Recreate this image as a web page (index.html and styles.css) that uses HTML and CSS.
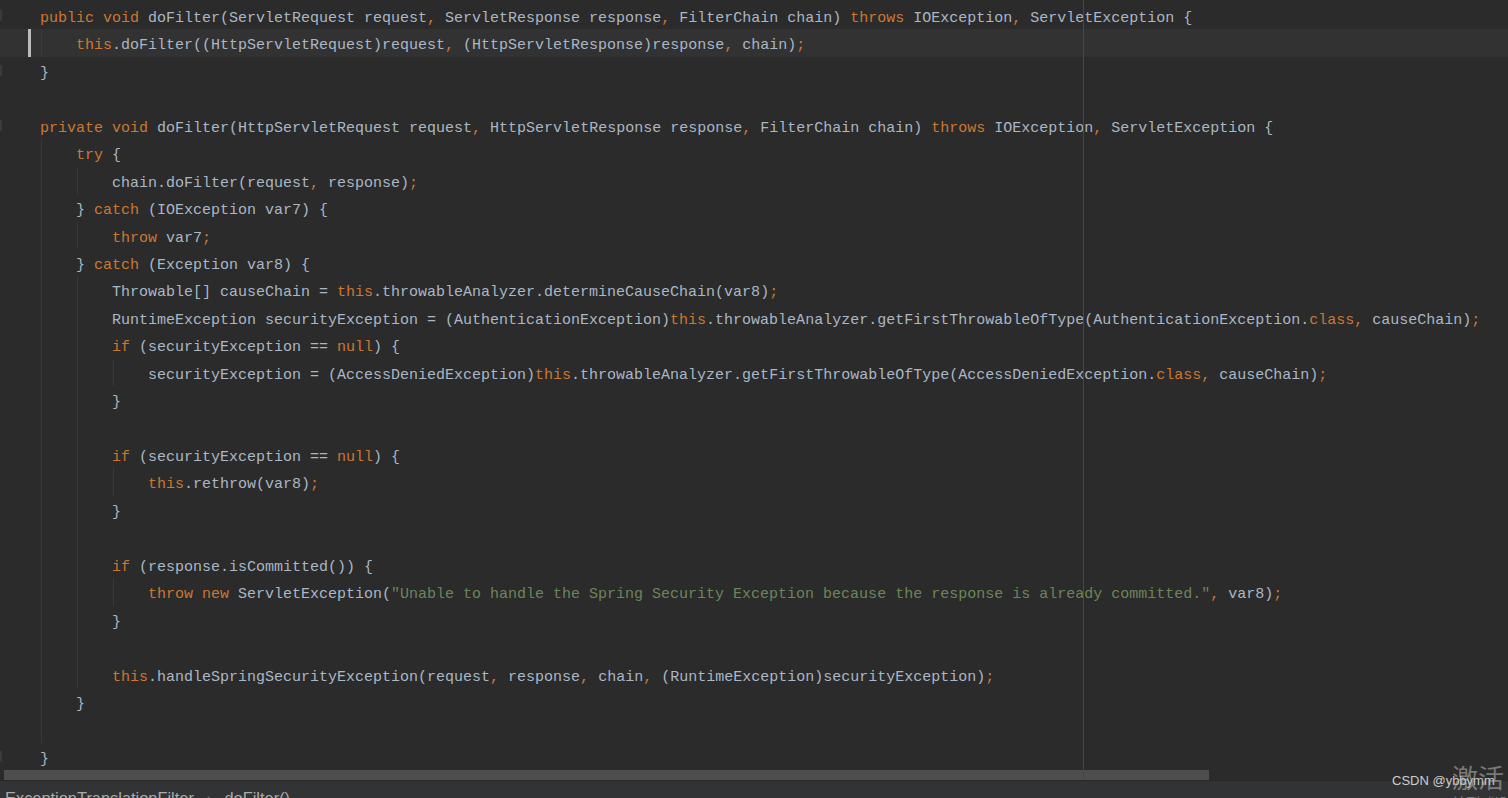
FILE: index.html
```html
<!DOCTYPE html>
<html lang="en">
<head>
    <meta charset="UTF-8">
    <meta name="viewport" content="width=device-width, initial-scale=1.0">
    <title>ExceptionTranslationFilter</title>
    <link rel="stylesheet" href="styles.css">
</head>
<body>
    <div class="main">
        <div class="editor">
            <div class="code">
                <div class="ln"><span class="gut"><i class="fold"></i></span><span class="txt"><span class="k">public void</span> doFilter(ServletRequest request<span class="p">,</span> ServletResponse response<span class="p">,</span> FilterChain chain) <span class="k">throws</span> IOException<span class="p">,</span> ServletException {</span></div>
                <div class="ln cur"><span class="gut"><i class="caret"></i></span><span class="txt"><span class="ig"></span><span class="k">this</span>.doFilter((HttpServletRequest)request<span class="p">,</span> (HttpServletResponse)response<span class="p">,</span> chain)<span class="p">;</span></span></div>
                <div class="ln"><span class="gut"><i class="fold"></i></span><span class="txt">}</span></div>
                <div class="ln"><span class="gut"></span><span class="txt"></span></div>
                <div class="ln"><span class="gut"><i class="fold"></i></span><span class="txt"><span class="k">private void</span> doFilter(HttpServletRequest request<span class="p">,</span> HttpServletResponse response<span class="p">,</span> FilterChain chain) <span class="k">throws</span> IOException<span class="p">,</span> ServletException {</span></div>
                <div class="ln"><span class="gut"></span><span class="txt"><span class="ig"></span><span class="k">try</span> {</span></div>
                <div class="ln"><span class="gut"></span><span class="txt"><span class="ig"></span><span class="ig"></span>chain.doFilter(request<span class="p">,</span> response)<span class="p">;</span></span></div>
                <div class="ln"><span class="gut"></span><span class="txt"><span class="ig"></span>} <span class="k">catch</span> (IOException var7) {</span></div>
                <div class="ln"><span class="gut"></span><span class="txt"><span class="ig"></span><span class="ig"></span><span class="k">throw</span> var7<span class="p">;</span></span></div>
                <div class="ln"><span class="gut"></span><span class="txt"><span class="ig"></span>} <span class="k">catch</span> (Exception var8) {</span></div>
                <div class="ln"><span class="gut"></span><span class="txt"><span class="ig"></span><span class="ig"></span>Throwable[] causeChain = <span class="k">this</span>.throwableAnalyzer.determineCauseChain(var8)<span class="p">;</span></span></div>
                <div class="ln"><span class="gut"></span><span class="txt"><span class="ig"></span><span class="ig"></span>RuntimeException securityException = (AuthenticationException)<span class="k">this</span>.throwableAnalyzer.getFirstThrowableOfType(AuthenticationException.<span class="k">class</span><span class="p">,</span> causeChain)<span class="p">;</span></span></div>
                <div class="ln"><span class="gut"></span><span class="txt"><span class="ig"></span><span class="ig"></span><span class="k">if</span> (securityException == <span class="k">null</span>) {</span></div>
                <div class="ln"><span class="gut"></span><span class="txt"><span class="ig"></span><span class="ig"></span><span class="ig"></span>securityException = (AccessDeniedException)<span class="k">this</span>.throwableAnalyzer.getFirstThrowableOfType(AccessDeniedException.<span class="k">class</span><span class="p">,</span> causeChain)<span class="p">;</span></span></div>
                <div class="ln"><span class="gut"></span><span class="txt"><span class="ig"></span><span class="ig"></span>}</span></div>
                <div class="ln"><span class="gut"></span><span class="txt"><span class="ig"></span><span class="ig"></span></span></div>
                <div class="ln"><span class="gut"></span><span class="txt"><span class="ig"></span><span class="ig"></span><span class="k">if</span> (securityException == <span class="k">null</span>) {</span></div>
                <div class="ln"><span class="gut"></span><span class="txt"><span class="ig"></span><span class="ig"></span><span class="ig"></span><span class="k">this</span>.rethrow(var8)<span class="p">;</span></span></div>
                <div class="ln"><span class="gut"></span><span class="txt"><span class="ig"></span><span class="ig"></span>}</span></div>
                <div class="ln"><span class="gut"></span><span class="txt"><span class="ig"></span><span class="ig"></span></span></div>
                <div class="ln"><span class="gut"></span><span class="txt"><span class="ig"></span><span class="ig"></span><span class="k">if</span> (response.isCommitted()) {</span></div>
                <div class="ln"><span class="gut"></span><span class="txt"><span class="ig"></span><span class="ig"></span><span class="ig"></span><span class="k">throw new</span> ServletException(<span class="s">"Unable to handle the Spring Security Exception because the response is already committed."</span><span class="p">,</span> var8)<span class="p">;</span></span></div>
                <div class="ln"><span class="gut"></span><span class="txt"><span class="ig"></span><span class="ig"></span>}</span></div>
                <div class="ln"><span class="gut"></span><span class="txt"><span class="ig"></span><span class="ig"></span></span></div>
                <div class="ln"><span class="gut"></span><span class="txt"><span class="ig"></span><span class="ig"></span><span class="k">this</span>.handleSpringSecurityException(request<span class="p">,</span> response<span class="p">,</span> chain<span class="p">,</span> (RuntimeException)securityException)<span class="p">;</span></span></div>
                <div class="ln"><span class="gut"></span><span class="txt"><span class="ig"></span>}</span></div>
                <div class="ln"><span class="gut"></span><span class="txt"><span class="ig"></span></span></div>
                <div class="ln"><span class="gut"><i class="fold"></i></span><span class="txt">}</span></div>
            </div>
        </div>
        <div class="hscroll"><div class="thumb"></div></div>
        <div class="margin-line"></div>
    </div>
    <div class="crumbs">
        <span>ExceptionTranslationFilter</span>
        <span class="sep">›</span>
        <span>doFilter()</span>
    </div>

    <div class="wm-csdn">CSDN @ybbymm</div>
    <div class="wm-win">
        <div class="wm-big">激活</div>
        <div class="wm-small">转到“设置”以激活 Windows。</div>
    </div>
</body>
</html>
```

FILE: styles.css
```css
body, html {
    margin: 0;
    padding: 0;
    overflow: hidden;
    width: 100%;
    height: 100%;
    background: #2b2b2b;
}
.main {
    position: relative;
}
.editor {
    height: 770px;
    overflow: hidden;
}
.code {
    padding-top: 2px;
    font-family: "Liberation Mono", monospace;
    font-size: 15px;
    color: #a9b7c6;
}
.ln {
    display: flex;
    height: 27.45px;
    line-height: 27.45px;
    white-space: pre;
}
.ln.cur {
    background: #323232;
}
.gut {
    flex: 0 0 40px;
    position: relative;
}
/* text sits a bit low in the line, like the IDE draws it */
.txt {
    display: flex;
    position: relative;
    top: 3px;
}
.ig {
    display: inline-block;
    width: 36px;
    height: 27.45px;
    margin-top: -3px;
    background: linear-gradient(#393939, #393939) 1px 0 / 1px 100% no-repeat;
}
.k {
    color: #cc7832;
}
.p {
    color: #cc7832;
}
.s {
    color: #6a8759;
}
.caret {
    position: absolute;
    left: 28px;
    top: 0;
    width: 3px;
    height: 100%;
    background: #bbbbbb;
}
.fold {
    position: absolute;
    left: 0;
    top: 8px;
    width: 2px;
    height: 11px;
    background: #3a3a3a;
}
.hscroll {
    height: 10px;
    padding-left: 4px;
    border-bottom: 1px solid #282828;
}
.thumb {
    width: 1205px;
    height: 10px;
    background: #4e4e4e;
}
.margin-line {
    position: absolute;
    left: 1083px;
    top: 0;
    bottom: 1px;
    width: 1px;
    background: #474747;
}
.crumbs {
    height: 17px;
    overflow: hidden;
    background: #313335;
    box-sizing: border-box;
    padding: 8px 0 0 5px;
    font-family: "Liberation Sans", Arial, sans-serif;
    font-size: 16.4px;
    line-height: 18px;
    color: #aaaaaa;
    white-space: nowrap;
}
.crumbs .sep {
    color: #777777;
    margin: 0 8px;
}
.wm-csdn {
    position: absolute;
    left: 1392px;
    top: 773px;
    font-family: "Liberation Sans", Arial, sans-serif;
    font-size: 13px;
    line-height: 16px;
    color: rgba(235, 235, 235, 0.85);
}
.wm-win {
    position: absolute;
    left: 1452px;
    top: 761px;
    font-family: "Noto Sans CJK SC", sans-serif;
    color: rgba(190, 190, 190, 0.55);
    white-space: nowrap;
}
.wm-big {
    font-size: 26px;
    line-height: 32px;
}
.wm-small {
    font-size: 14px;
    line-height: 18px;
}
```
